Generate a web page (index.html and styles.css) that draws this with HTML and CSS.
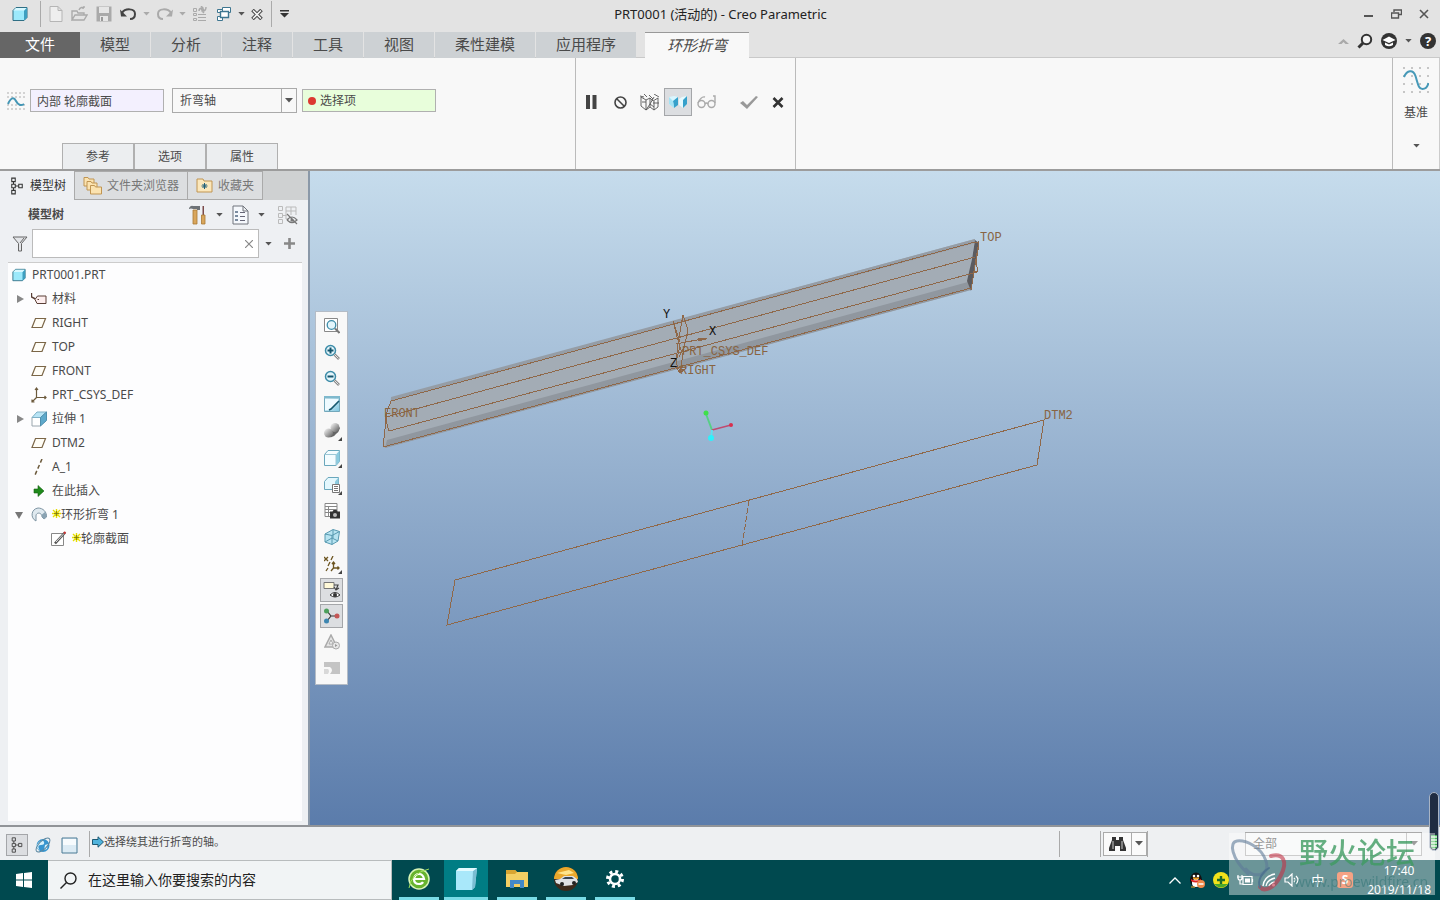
FILE: index.html
```html
<!DOCTYPE html>
<html lang="zh-CN">
<head>
  <meta charset="UTF-8">
  <meta name="viewport" content="width=device-width, initial-scale=1.0">
  <title>PRT0001 (活动的) - Creo Parametric</title>
  <link rel="stylesheet" href="styles.css">
</head>
<body>
  <!-- shared icons -->
  <svg class="defs" width="0" height="0" aria-hidden="true">
    <defs>
      <linearGradient id="gBlue" x1="0" y1="0" x2="1" y2="1"><stop offset="0" stop-color="#fff"/><stop offset="1" stop-color="#7cc6e0"/></linearGradient>
      <linearGradient id="gBody" x1="0" y1="0" x2="1" y2="1"><stop offset="0" stop-color="#fff"/><stop offset="1" stop-color="#555"/></linearGradient>
      <symbol id="caret" viewBox="0 0 8 5"><path d="M0 0h8L4 4.500z" fill="currentColor"/></symbol>
      <symbol id="cube" viewBox="0 0 16 16"><path d="M1 4.500 4 1.500h11v10L12 14.500H1z" fill="#9ce9fb" stroke="#2f6f85"/><path d="M12 4.500 15 1.500v10L12 14.500z" fill="#3e9fc0"/><path d="M1.500 4.500 4 2h10.500L12 4.500z" fill="#d8f8ff"/></symbol>
      <symbol id="plane" viewBox="0 0 16 16"><path d="M4.500 3.500h10L11 12.500H1z" fill="#fffdf6" stroke="#7b6647" stroke-width="1.200"/></symbol>
      <symbol id="nodes" viewBox="0 0 16 20"><g fill="none" stroke="currentColor" stroke-width="1.200"><path d="M2 1h4v4H2zM2 8h4v4H2zM10 8h4v4h-4zM2 15h4v4H2zM4 5v3M4 12v3M6 10h4"/></g></symbol>
      <symbol id="star" viewBox="0 0 9 9"><path d="M4.500 0v9M0 4.500h9M1 1l7 7M8 1 1 8" stroke="#e6de00" stroke-width="1.400"/><path d="M4.500 2v5M2 4.500h5" stroke="#77721a" stroke-width=".8"/></symbol>
      <symbol id="magnifier" viewBox="0 0 16 16"><circle cx="6.500" cy="6.500" r="5" fill="#e3f5fb" stroke="#3d8ca8" stroke-width="1.500"/><path d="m10.500 10.500 4.500 4.500" stroke="#8a8a8a" stroke-width="2.600"/><path d="m10.500 10.500 4 4" stroke="#e5e5e5"/></symbol>
      <symbol id="wave" viewBox="0 0 26 26"><path d="M1 1h.01M9 1h.01M17 1h.01M25 1h.01M1 9h.01M9 9h.01M17 9h.01M25 9h.01M1 17h.01M9 17h.01M17 17h.01M25 17h.01M1 25h.01M9 25h.01M17 25h.01M25 25h.01" stroke="#333" stroke-linecap="square"/><path d="M1 10C4 3 10 2 12.500 9c2.500 8 3 13 7 13 3 0 5-2 6-6" fill="none" stroke="#4699b8" stroke-width="2"/></symbol>
    </defs>
  </svg>

  <div class="app">
    <header class="titlebar">
      <div class="quick">
        <svg class="quick-app" width="16" height="16"><use href="#cube"/></svg>
        <i class="vline"></i>
        <button type="button" aria-label="新建"><svg width="14" height="16" viewBox="0 0 14 16"><path d="M1 .5h8l4 4v11H1zM9 .5v4h4" fill="#eee" stroke="#b5b5b5"/></svg></button>
        <button type="button" aria-label="打开"><svg width="17" height="16" viewBox="0 0 17 16"><path d="M1 14V5h5l1 2h6v2M1 14l3-5h12l-3 5zM8 4c1-3 4-3 5-2m0 0h-2m2 0V0" fill="none" stroke="#aaa" stroke-width="1.400"/></svg></button>
        <button type="button" aria-label="保存"><svg width="16" height="16" viewBox="0 0 16 16"><path d="M.5.500h15v15H.500z" fill="#aaa"/><path d="M3 1h10v6H3zM4 10h8v5H4z" fill="#e6e6e6"/><path d="M5 11h2v4H5z" fill="#999"/></svg></button>
        <button type="button" aria-label="撤消"><svg width="17" height="14" viewBox="0 0 17 14"><path d="M2 6c3-5 13-5 13 1 0 3-2 5-5 5" fill="none" stroke="#444" stroke-width="2"/><path d="M0 2.500 1 9.500h6z" fill="#444"/></svg></button>
        <svg class="caret dim" width="7" height="4"><use href="#caret"/></svg>
        <button type="button" aria-label="重做"><svg width="17" height="14" viewBox="0 0 17 14"><path d="M15 6C12 1 2 1 2 7c0 3 2 5 5 5" fill="none" stroke="#aaa" stroke-width="2"/><path d="m17 2.500-1 7h-6z" fill="#aaa"/></svg></button>
        <svg class="caret dim" width="7" height="4"><use href="#caret"/></svg>
        <button type="button" aria-label="重新生成"><svg width="16" height="16" viewBox="0 0 16 16"><g fill="none" stroke="#aaa"><path d="M1.500 2.500h3v3h-3zM1.500 7.500h3v2h-3zM1.500 12.500h3v2h-3zM6 8.500h8M6 11.500h8M6 14.500h8"/><path d="M7 5c0-2 1-3 3-3M9 0l2 2-2 2M14 1c0 3-1 4-3 4m1-2-2 2 2 2" stroke-width="1.400"/></g></svg></button>
        <button type="button" aria-label="窗口"><svg width="16" height="16" viewBox="0 0 16 16"><g fill="#fff" stroke="#3e7690"><path d="M6.500 1.500h8v5h-8z"/><path d="M1.500 3.500h5v3h-5z"/><path d="M1.500 10.500h5v4h-5z"/><path d="M4.500 5.500h8v6h-8z" stroke-width="1.400"/></g></svg></button>
        <svg class="caret" width="7" height="4"><use href="#caret"/></svg>
        <button type="button" aria-label="关闭窗口"><svg width="12" height="11" viewBox="0 0 12 11"><path d="m1.500 1 9 9m0-9-9 9" stroke="#444" stroke-width="3.600"/><path d="m2 1.500 8 8m0-8-8 8" stroke="#f5f5f5" stroke-width="1.600"/></svg></button>
        <i class="vline"></i>
        <button type="button" aria-label="自定义"><svg width="9" height="8" viewBox="0 0 9 8"><path d="M0 0h9v1.500H0zM0 3h9L4.500 7.500z" fill="#333"/></svg></button>
      </div>
      <h1>PRT0001 (活动的) - Creo Parametric</h1>
      <div class="window-btns">
        <button type="button" aria-label="最小化"><svg width="10" height="10" viewBox="0 0 10 10"><path d="M0 7h9" stroke="#555" stroke-width="2"/></svg></button>
        <button type="button" aria-label="还原"><svg width="11" height="10" viewBox="0 0 11 10"><path d="M3 3V1h7.500v4.500H8M.5 4h7v5h-7z" fill="none" stroke="#555" stroke-width="1.400"/></svg></button>
        <button type="button" aria-label="关闭"><svg width="10" height="10" viewBox="0 0 10 10"><path d="m1 1 8 8m0-8L1 9" stroke="#555" stroke-width="1.600"/></svg></button>
      </div>
    </header>

    <nav class="tabs">
      <button type="button" class="tab file">文件</button>
      <button type="button" class="tab">模型</button>
      <button type="button" class="tab">分析</button>
      <button type="button" class="tab">注释</button>
      <button type="button" class="tab">工具</button>
      <button type="button" class="tab">视图</button>
      <button type="button" class="tab">柔性建模</button>
      <button type="button" class="tab">应用程序</button>
      <button type="button" class="tab active">环形折弯</button>
      <div class="tab-tools">
        <button type="button" aria-label="最小化功能区"><svg width="11" height="6" viewBox="0 0 11 6"><path d="m0 6 5.500-5L11 6H7.500l-2-2-2 2z" fill="#aaa"/></svg></button>
        <button type="button" aria-label="搜索命令"><svg width="16" height="16" viewBox="0 0 16 16"><circle cx="9.500" cy="6.500" r="4.700" fill="#f4f4f4" stroke="#333" stroke-width="2"/><path d="m6 10-4.500 4.500" stroke="#333" stroke-width="3"/></svg></button>
        <button type="button" aria-label="学习"><svg width="16" height="16" viewBox="0 0 16 16"><circle cx="8" cy="8" r="8" fill="#333"/><path d="m1.500 7 6.500-3.500L14.500 7 8 10zM4 9.500v2.500q4 2.500 8 0V9.500l-4 2z" fill="#fff"/></svg></button>
        <svg class="caret" width="7" height="4"><use href="#caret"/></svg>
        <button type="button" class="help" aria-label="帮助">?</button>
      </div>
    </nav>

    <section class="ribbon">
      <div class="dashboard">
        <div class="dash-row">
          <svg width="18" height="18" viewBox="0 0 18 18"><path d="M.5 1h17M.5 17h17M.5 5h17M.5 13h17" stroke="#666" stroke-dasharray="1 3"/><path d="M1 12C4 5 7 5 9 9s5 5 8 3" fill="none" stroke="#4496b5" stroke-width="2"/></svg>
          <input class="field profile" type="text" value="内部 轮廓截面" aria-label="轮廓截面">
          <span class="select-box bend">
            <select aria-label="折弯类型"><option>折弯轴</option><option>折弯半径</option><option>360 度折弯</option></select>
            <svg class="caret" width="8" height="5"><use href="#caret"/></svg>
          </span>
          <label class="field collector"><i class="dot"></i><input type="text" value="选择项" aria-label="折弯轴收集器"></label>
        </div>
        <div class="subtabs">
          <button type="button">参考</button>
          <button type="button">选项</button>
          <button type="button">属性</button>
        </div>
      </div>
      <div class="controls">
        <button type="button" aria-label="暂停"><svg width="12" height="14" viewBox="0 0 12 14"><path d="M1 0h4v14H1zM7.500 0h4v14h-4z" fill="#444"/></svg></button>
        <button type="button" aria-label="无预览"><svg width="13" height="13" viewBox="0 0 13 13"><circle cx="6.500" cy="6.500" r="5.500" fill="none" stroke="#444" stroke-width="1.600"/><path d="m2.500 2.500 8 8" stroke="#444" stroke-width="1.600"/></svg></button>
        <button type="button" aria-label="分离预览"><svg width="19" height="17" viewBox="0 0 19 17"><path d="M1 3l5 3 4-2v9l-4 3-5-4zM6 6v10M10 4l3 3 5-3v9l-4 3-4-3M14 7v9M6 16l4-6 4-7M0 2l4 1M19 3l-5-3M4 0l3 3M2 8h4M13 9h6M10 10l4 3M9 1l4 4" fill="none" stroke="#555" stroke-width=".9"/></svg></button>
        <button type="button" class="pressed" aria-label="连接预览"><svg width="19" height="14" viewBox="0 0 19 14"><path d="M0 2l5-1 4 1-4 11-5-4z" fill="#d9f6ff"/><path d="M9 2v8l-4 3-1-7z" fill="#36a1cb"/><path d="M10 4l3-2 5-1-4 12-4-3z" fill="#e4faff"/><path d="M18 1v8l-4 4V5z" fill="#36a1cb"/><path d="M0 2l4 4 1 7-5-4z" fill="#a5e3f5"/></svg></button>
        <button type="button" aria-label="校验"><svg width="20" height="14" viewBox="0 0 20 14"><g fill="none" stroke="#aaa" stroke-width="1.400"><circle cx="4.500" cy="9" r="3.500"/><circle cx="14.500" cy="9" r="3.500"/><path d="M8 9q1.500-2 3 0M1 8Q4 1 8 2M18 8V1h-2"/></g></svg></button>
        <button type="button" class="ok" aria-label="确定"><svg width="20" height="15" viewBox="0 0 20 15"><path d="m1 8 3-2 4 4L17 1l2 1L8 14z" fill="#999"/></svg></button>
        <button type="button" aria-label="取消"><svg width="12" height="11" viewBox="0 0 12 11"><path d="m1.500 1 9 9m0-9-9 9" stroke="#333" stroke-width="2.600"/></svg></button>
      </div>
      <div class="ribbon-fill"></div>
      <button type="button" class="datum">
        <svg width="26" height="26"><use href="#wave"/></svg>
        <span>基准</span>
        <svg class="caret" width="7" height="4"><use href="#caret"/></svg>
      </button>
    </section>

    <main class="work">
      <aside class="sidebar">
        <div class="side-tabs">
          <button type="button" class="active"><svg width="14" height="20"><use href="#nodes"/></svg>模型树</button>
          <button type="button"><svg width="19" height="19" viewBox="0 0 19 19"><g fill="#fbe3b0" stroke="#c09552"><path d="M1 1.500h4l1 1.500h5v7H1z"/><path d="M4 5.500h4l1 1.500h5v7H4z"/><path d="M7.500 9.500h4l1 1.500h6v7h-11z"/></g></svg>文件夹浏览器</button>
          <button type="button"><svg width="17" height="15" viewBox="0 0 17 15"><path d="M1 1h6l1 2h8v11H1z" fill="#fbe7bb" stroke="#c09552"/><path d="M8.500 5v6M5.500 8h6M6.500 6l4 4m0-4-4 4" stroke="#20607a"/></svg>收藏夹</button>
        </div>
        <div class="side-head">
          <h2>模型树</h2>
          <button type="button" aria-label="设置"><svg width="18" height="20" viewBox="0 0 18 20"><path d="M0 3q2-3 4-2h7v4H8V4H4Q2 3 0 4z" fill="#6d7277"/><path d="M4 5h4v14H4z" fill="#d9a65c" stroke="#a87833" stroke-width=".8"/><path d="M13.500 1h1.500v9h-1.500z" fill="#7a4a4a"/><path d="M12.500 10h3.500v9h-3.500z" fill="#d9a65c" stroke="#a87833" stroke-width=".8"/></svg></button>
          <svg class="caret" width="7" height="4"><use href="#caret"/></svg>
          <button type="button" aria-label="显示"><svg width="17" height="20" viewBox="0 0 17 20"><path d="M1 1h10l5 5v13H1zM11 1v5h5" fill="#f5f8fc" stroke="#70757c"/><path d="M3 6h3v2H3zM3 10h3v2H3zM3 14h3v2H3z" fill="#7b8ca0"/><path d="M8 7.500h5M8 11.500h5M8 15.500h5" stroke="#667"/></svg></button>
          <svg class="caret" width="7" height="4"><use href="#caret"/></svg>
          <button type="button" class="last" aria-label="树列"><svg width="21" height="20" viewBox="0 0 21 20"><g fill="none" stroke="#bbb"><path d="M1.500 1.500h4v4h-4zM1.500 8.500h4v4h-4zM1.500 14.500h4v4h-4zM5.500 10.500h4M9 2h10v8M9 6h10M14 2v8M9 2v12h3"/></g><path d="M10 15q5-6 10 0-5 5-10 0M10 9l10 10" fill="none" stroke="#777" stroke-width="1.200"/><circle cx="15" cy="15" r="1.600" fill="#777"/></svg></button>
        </div>
        <div class="side-search">
          <svg width="16" height="16" viewBox="0 0 16 16"><path d="M1 1h14L9.500 7.500V15h-3V7.500z" fill="#e3e5e8" stroke="#666"/><path d="m12 2-4 5" stroke="#666"/></svg>
          <div class="search-box">
            <input type="text" aria-label="过滤模型树">
            <button type="button" aria-label="清除"><svg width="8" height="8" viewBox="0 0 8 8"><path d="m0 0 8 8m0-8L0 8" stroke="#888" stroke-width="1.200"/></svg></button>
          </div>
          <svg class="caret" width="7" height="4"><use href="#caret"/></svg>
          <button type="button" aria-label="添加"><svg width="11" height="11" viewBox="0 0 11 11"><path d="M5.500 0v11M0 5.500h11" stroke="#888" stroke-width="2.600"/></svg></button>
        </div>
        <ul class="tree">
          <li class="root"><svg width="14" height="14"><use href="#cube"/></svg>PRT0001.PRT</li>
          <li><i class="exp closed"></i><svg width="16" height="16" viewBox="0 0 16 16"><path d="M.5 2v4l4 2" fill="none" stroke="#5a3f36" stroke-width="1.400"/><path d="M4 8.500 6.500 5H15v7.500H6z" fill="#fdeeee" stroke="#5a3f36"/><path d="M6.500 8.500h1.500" stroke="#5a3f36"/></svg>材料</li>
          <li><i class="exp"></i><svg width="16" height="16"><use href="#plane"/></svg>RIGHT</li>
          <li><i class="exp"></i><svg width="16" height="16"><use href="#plane"/></svg>TOP</li>
          <li><i class="exp"></i><svg width="16" height="16"><use href="#plane"/></svg>FRONT</li>
          <li><i class="exp"></i><svg width="16" height="16" viewBox="0 0 16 16"><path d="M5.500 1v9.500H15M5.500 10.500 1 15M4 3l1.500-2L7 3M13.500 9l1.500 1.500-1.500 1.500M1 12.500V15h2.500" fill="none" stroke="#6c5a3c" stroke-width="1.200"/></svg>PRT_CSYS_DEF</li>
          <li><i class="exp closed"></i><svg width="16" height="16" viewBox="0 0 16 16"><path d="M1 6.500h8.500V15H1z" fill="#fff" stroke="#9aa6ae"/><path d="M1 6.500 6 1h9.500l-6 5.500z" fill="#b8e4f5" stroke="#7fb0c6"/><path d="m9.500 6.500 6-5.500v8.500l-6 5.500z" fill="#5ea9cb" stroke="#4f8fae"/></svg>拉伸 1</li>
          <li><i class="exp"></i><svg width="16" height="16"><use href="#plane"/></svg>DTM2</li>
          <li><i class="exp"></i><svg width="16" height="16" viewBox="0 0 16 16"><path d="M11 0 4 16" stroke="#6c5a3c" stroke-width="1.500" stroke-dasharray="4 2.500"/></svg>A_1</li>
          <li><i class="exp"></i><svg width="16" height="16" viewBox="0 0 16 16"><path d="M3 6h4V2.500L13 8l-6 5.500V10H3z" fill="#1f8a1b" stroke="#145f12" stroke-width=".6"/></svg>在此插入</li>
          <li><i class="exp open"></i><svg width="16" height="16" viewBox="0 0 16 16"><path d="M5 14C-1 11 0 2 7 1c5 0 9 4 8.500 9l-2.500 2-2-2C11 5 5 5 5 9z" fill="#dfe9ef" stroke="#7f95a3"/><path d="m11 10 2 2 2.500-2q0-3-1.500-5l-3 2.500z" fill="#8aa3b3"/></svg><svg class="star" width="9" height="9"><use href="#star"/></svg>环形折弯 1</li>
          <li class="child"><svg width="16" height="16" viewBox="0 0 16 16"><path d="M.5 2.500h12v12H.500z" fill="#fff" stroke="#888"/><path d="M4 12.500 14 1.500" stroke="#555" stroke-width="2.600"/><path d="M5 11 13 2.500" stroke="#ddd"/><path d="m13 2.500 1.500-1.500" stroke="#c33" stroke-width="2"/></svg><svg class="star" width="9" height="9"><use href="#star"/></svg>轮廓截面</li>
        </ul>
      </aside>

      <div class="viewport">
        <svg class="scene" width="100%" height="100%">
          <g transform="translate(-310 -171)">
            <!-- extruded strip -->
            <path d="M391 398 975 239l-8 52-582 157-2-1z" fill="#a3acb5"/>
            <path d="M391 397 975 239v4L391 401z" fill="#959da6"/>
            <path d="m387 440 581-158 3 8-586 158z" fill="#90979f"/>
            <path d="m975 240 4 3-8 48-4-10 5-22z" fill="#5b5b5f"/>
            <g class="datum-lines">
              <path d="M391 401 975 242M386 417 975 257M389 431l588-159M383 447l588-159M391 401l-6 16 4 14M387 412l-4 35"/>
              <path d="m975 242 4 1-3 20 2 8-5 1M979 241l-8 49"/>
              <path d="M683 315l5 15-4 18-4 25M683 315l-5 28-2 20 5 10M673 321l7 21M673 321l3 12M676 344l31-6M698 338l8 1-8 2zM676 333l4 14 3 9M680 346l-3 12M684 347l-5 10M676 367l10 1-6 5z"/>
              <path d="m455 580 589-160-7 45-590 160z"/>
              <path d="m749 500-7 47" stroke-dasharray="6 2"/>
            </g>
            <g class="datum-tags">
              <text x="980" y="241">TOP</text>
              <text x="384" y="417">FRONT</text>
              <text x="682" y="355">PRT_CSYS_DEF</text>
              <text x="680" y="374">RIGHT</text>
              <text x="1044" y="419">DTM2</text>
            </g>
            <g class="axis-tags">
              <text x="663" y="318">Y</text>
              <text x="709" y="335">X</text>
              <text x="670" y="367">Z</text>
            </g>
            <!-- spin center -->
            <path d="M712 430 706 414" stroke="#56cf86" stroke-width="2"/>
            <path d="m712 430 19-5" stroke="#c04a70" stroke-width="1.500"/>
            <path d="m712 430-1 8" stroke="#5fe0f0" stroke-width="2"/>
            <circle cx="706" cy="413" r="2.500" fill="#3fe04a"/>
            <circle cx="731" cy="425" r="2" fill="#d92f4d"/>
            <circle cx="711" cy="438" r="3" fill="#2ff0fb"/>
          </g>
        </svg>

        <div class="view-tools">
          <button type="button" aria-label="重新调整"><svg width="16" height="16" viewBox="0 0 16 16"><path d="M.5.500h13v13H.500z" fill="#fff" stroke="#888"/><circle cx="7.500" cy="7" r="4.300" fill="#e3f5fb" stroke="#3d8ca8" stroke-width="1.300"/><path d="m11 10.500 4.500 4.500" stroke="#777" stroke-width="2"/></svg></button>
          <button type="button" aria-label="放大"><svg width="16" height="16" viewBox="0 0 16 16"><use href="#magnifier"/><path d="M6.500 3.500v6M3.500 6.500h6" stroke="#14546c" stroke-width="2"/></svg></button>
          <button type="button" aria-label="缩小"><svg width="16" height="16" viewBox="0 0 16 16"><use href="#magnifier"/><path d="M3.500 6.500h6" stroke="#14546c" stroke-width="2"/></svg></button>
          <button type="button" aria-label="重画"><svg width="16" height="16" viewBox="0 0 16 16"><path d="M.5.500h15v15H.500z" fill="url(#gBlue)" stroke="#73a8bb"/><path d="M1 3h13v2L6 14H1z" fill="#eefaff"/><path d="M15 5 7 13l-2 1" stroke="#17596f" stroke-width="1.600" fill="none"/><path d="M0 0h16v2.500H0z" fill="#7fb9cd"/></svg></button>
          <button type="button" class="fly" aria-label="渲染选项"><svg width="16" height="16" viewBox="0 0 16 16"><path d="M2 12q6 5 10-1 3-2 4-6L14 3 5 8z" fill="#666"/><circle cx="11" cy="4.500" r="4.500" fill="url(#gBody)"/><circle cx="4.500" cy="10" r="4.500" fill="url(#gBody)"/></svg></button>
          <button type="button" class="fly" aria-label="显示样式"><svg width="16" height="16" viewBox="0 0 16 16"><path d="M.5 4.500 4 .5h11.500v11L12 15.500H.500z" fill="#f3fcff" stroke="#6aa7bc"/><path d="m12 4.500 3.500-4v11l-3.500 4z" fill="#8bcbe0"/><path d="M.5 4.500H12v11" fill="none" stroke="#9cc7d6"/></svg></button>
          <button type="button" class="fly" aria-label="已保存方向"><svg width="16" height="16" viewBox="0 0 16 16"><path d="M.5 4.500 4 .5h10.500v8L11 12.500H.500z" fill="#e3f7fd" stroke="#6aa7bc"/><path d="m11 4.500 3.500-4v8l-3.500 4z" fill="#8bcbe0"/><path d="M8.500 7.500h7v8h-7z" fill="#fff" stroke="#777"/><path d="M10 9.500h4M10 11.500h4M10 13.500h4" stroke="#777"/></svg></button>
          <button type="button" aria-label="视图管理器"><svg width="16" height="16" viewBox="0 0 16 16"><path d="M1 .5h12v13H1zM1 3.500h12M1 6.500h12M1 9.500h6M4.500 3v10" fill="#fff" stroke="#888"/><path d="M6 8.500h2.500l1-1.500h3l1 1.500H16v7H6z" fill="#333"/><circle cx="11" cy="12" r="2" fill="#bbb"/></svg></button>
          <button type="button" aria-label="透视图"><svg width="16" height="16" viewBox="0 0 16 16"><path d="m1 5 8-4.500 6.500 2L14 12l-6 3.500L1 13z" fill="#b8e4f1" stroke="#5799b0"/><path d="m1 5 7 1.500V15.500M8 6.500l7.500-4M1 13l7-4 6 3M9 1v8" fill="none" stroke="#5799b0"/></svg></button>
          <button type="button" class="fly" aria-label="基准显示"><svg width="16" height="16" viewBox="0 0 16 16"><path d="m0 1 4 4m0-4L0 5M9 0 7 4M6 6l-2 4M4 12l-2 3M9.500 6v6H15M9.500 12 7 15M8 8l1.500-2L11 8M13.500 10.500 15 12l-1.500 1.500" fill="none" stroke="#6c5520" stroke-width="1.300"/></svg></button>
          <button type="button" class="pressed" aria-label="注释显示"><svg width="18" height="18" viewBox="0 0 18 18"><path d="M1 1.500h10v6H1z" fill="#fff9d8" stroke="#777"/><path d="M11 4h4l-2 5M11 6l2 3 3-2" fill="none" stroke="#444" stroke-width="1.200"/><path d="M7 14q5-5 10 0-5 4-10 0" fill="#fff" stroke="#333"/><circle cx="12" cy="14" r="2" fill="#333"/></svg></button>
          <button type="button" class="pressed" aria-label="旋转中心"><svg width="18" height="16" viewBox="0 0 18 16"><path d="m4 3 4 5h6M8 8l-4 5" fill="none" stroke="#333" stroke-width="1.200"/><circle cx="3.500" cy="3" r="2.500" fill="#4c9f5c"/><circle cx="14" cy="8" r="2.500" fill="#c45656"/><circle cx="3.500" cy="13" r="2.500" fill="#3d86b0"/></svg></button>
          <button type="button" aria-label="模拟"><svg width="16" height="16" viewBox="0 0 16 16"><path d="m7 1 6 12H1z" fill="#e3e3e3" stroke="#aaa" stroke-width="1.500"/><path d="m7 6 2 4H5z" fill="#fff" stroke="#aaa"/><circle cx="12" cy="11.500" r="3.500" fill="#e8e8e8" stroke="#aaa"/><path d="m11 10 2.500 1.500L11 13z" fill="#999"/></svg></button>
          <button type="button" aria-label="截面"><svg width="16" height="12" viewBox="0 0 16 12"><path d="M0 0h16v12H6q4-4 0-7H0z" fill="#c4c4c4"/><path d="M0 7h4q2 2 0 5H0z" fill="#d8d8d8"/></svg></button>
        </div>
      </div>
    </main>

    <footer class="status">
      <button type="button" class="pressed" aria-label="模型树显示"><svg width="14" height="16"><use href="#nodes"/></svg></button>
      <button type="button" aria-label="浏览器"><svg width="18" height="18" viewBox="0 0 18 18"><circle cx="9" cy="9.500" r="6.500" fill="#3795cf"/><path d="M5 6q4-3 5 0t-3 3-2 4-3-3zM11 9l3-1-1 5-3 1z" fill="#d5f1fc"/><ellipse cx="9" cy="9" rx="9" ry="4" fill="none" stroke="#5b87a0" transform="rotate(-45 9 9)"/></svg></button>
      <button type="button" aria-label="全屏"><svg width="17" height="17" viewBox="0 0 17 17"><path d="M1 1h15v15H1z" fill="#dcebf4" stroke="#4b7b95"/><path d="M2 2h13v6H2z" fill="#f7fbfd"/></svg></button>
      <i class="vline"></i>
      <p><svg width="12" height="12" viewBox="0 0 12 12"><path d="M.5 3.500H6V.800L11.500 6 6 11.200V8.500H.500z" fill="#4fb3dc" stroke="#1c5872"/></svg>选择绕其进行折弯的轴。</p>
      <div class="status-right">
        <i class="vline"></i>
        <i class="vline find-line"></i>
        <div class="find">
          <button type="button" aria-label="查找"><svg width="17" height="16" viewBox="0 0 17 16"><path d="M3 1h4v3h3V1h4v3l3 8v3h-6v-5H6v5H0v-3l3-8z" fill="#333"/><path d="M4 5v8M13 5v8" stroke="#999" stroke-width="1.500"/></svg></button>
          <button type="button" aria-label="查找选项"><svg class="caret" width="8" height="5"><use href="#caret"/></svg></button>
        </div>
        <i class="vline"></i>
        <span class="select-box filter">
          <select aria-label="选择过滤器"><option>全部</option><option>几何</option><option>基准</option></select>
          <svg class="caret" width="8" height="5"><use href="#caret"/></svg>
        </span>
      </div>
    </footer>

    <div class="taskbar">
      <button type="button" class="start" aria-label="开始"><svg width="16" height="16" viewBox="0 0 16 16"><path d="m0 2 7-1v6.500H0zM8 1l8-1v7.500H8zM0 8.500h7V15l-7-1zM8 8.500h8V16l-8-1z" fill="#fff"/></svg></button>
      <label class="task-search">
        <svg width="17" height="17" viewBox="0 0 17 17"><circle cx="10.500" cy="6.500" r="5.500" fill="none" stroke="#222" stroke-width="1.400"/><path d="M6.500 10.500.500 16.500" stroke="#222" stroke-width="1.400"/></svg>
        <input type="text" placeholder="在这里输入你要搜索的内容" aria-label="搜索">
      </label>
      <div class="task-apps">
        <button type="button" aria-label="浏览器"><svg width="24" height="24" viewBox="0 0 24 24"><circle cx="12" cy="12" r="10" fill="#67b32e" stroke="#d8f5b8" stroke-width="1.500"/><path d="M7 12h10q-1-5-5-5t-5 5q0 5 5 5 3 0 4-2" fill="none" stroke="#fff" stroke-width="2.200"/><path d="M2 21Q4 6 22 2" fill="none" stroke="#9fe05a"/></svg></button>
        <button type="button" class="active" aria-label="Creo"><svg width="22" height="24" viewBox="0 0 22 24"><path d="m1 4 3-3h18l-2 19-3 3H1z" fill="#a9e8fa"/><path d="M18 4 22 1l-2 19-3 3z" fill="#79bdd2"/><path d="m1 4 3-3h18l-4 3z" fill="#e2fbff"/></svg></button>
        <button type="button" aria-label="文件资源管理器"><svg width="22" height="20" viewBox="0 0 22 20"><path d="M0 1h9l2 2h11v15H0z" fill="#f4cf63"/><path d="M0 1h9l2 2-2 2H0z" fill="#d9a531"/><path d="M4 11h14v8h-4v-4H8v4H4z" fill="#4389c8"/></svg></button>
        <button type="button" aria-label="游戏"><svg width="24" height="24" viewBox="0 0 24 24"><circle cx="12" cy="12" r="12" fill="#3d2a1c"/><path d="M0 12a12 12 0 0 1 24 0z" fill="#e9a82c"/><path d="m3 6 12-3 5 3-8 2z" fill="#ffe48b"/><path d="m1 13 5-1 4-3h9l4 3 1 3-5 3-9 1-8-3z" fill="#dfe1e4"/><path d="m8 12 3-2h7l2 2z" fill="#394552"/><circle cx="8" cy="17" r="2" fill="#222"/><circle cx="20" cy="16" r="2" fill="#222"/></svg></button>
        <button type="button" aria-label="设置"><svg width="18" height="18" viewBox="0 0 18 18"><circle cx="9" cy="9" r="7.500" fill="none" stroke="#fff" stroke-width="3" stroke-dasharray="3 2.890"/><circle cx="9" cy="9" r="5" fill="none" stroke="#fff" stroke-width="2.500"/></svg></button>
      </div>
      <div class="tray">
        <svg width="12" height="7" viewBox="0 0 12 7"><path d="m.5 6.500 5.500-5.500 5.500 5.500" fill="none" stroke="#fff" stroke-width="1.300"/></svg>
        <svg width="16" height="16" viewBox="0 0 16 16"><ellipse cx="7" cy="8" rx="6" ry="7.500" fill="#111"/><ellipse cx="7" cy="11" rx="4" ry="4" fill="#fff"/><path d="M2 7q5 3 10 0v2q-5 3-10 0z" fill="#d22"/><circle cx="5" cy="4" r="1.300" fill="#fff"/><circle cx="9" cy="4" r="1.300" fill="#fff"/><path d="M4 6h6L7 7.500zM2 15h4" stroke="#f5a020" fill="#f5a020"/><circle cx="12" cy="12" r="4" fill="#f08a4a"/><path d="M9.500 12h5" stroke="#fff" stroke-width="1.500"/></svg>
        <svg width="16" height="16" viewBox="0 0 16 16"><circle cx="8" cy="8" r="8" fill="#f2e21c"/><path d="M1 12q7 7 14 0" fill="#4aa92c"/><path d="M8 4v8M4 8h8" stroke="#1e6b2a" stroke-width="2.400"/></svg>
        <svg width="17" height="14" viewBox="0 0 17 14"><path d="M6 3.500h9v8H6zM15.500 6v3M1 2v3q0 2 2 2t2-2V2M0 4h6M3 7v4h3" fill="none" stroke="#fff" stroke-width="1.200"/><path d="M8 5.500h5v4H8z" fill="#fff"/></svg>
        <svg width="14" height="14" viewBox="0 0 14 14"><path d="M1 13Q2 3 13 1M4 13q1-6 9-8M7 13q1-3 6-4" fill="none" stroke="#fff" stroke-width="1.400"/><circle cx="11.500" cy="12" r="1.500" fill="#fff"/></svg>
        <svg width="16" height="14" viewBox="0 0 16 14"><path d="M1 5h3l4-4v12L4 9H1zM10 5q2 2 0 4M12 3q4 4 0 8" fill="none" stroke="#fff" stroke-width="1.200"/></svg>
        <span class="ime">中</span>
        <span class="sogou">S</span>
        <time>17:40<br>2019/11/18</time>
      </div>
    </div>
  </div>

  <div class="meter"><i></i></div>

  <div class="watermark">
    <svg width="62" height="58" viewBox="0 0 62 58"><g fill="none" stroke-linecap="round"><path d="M19 38C2 22 0 6 8 5s24 5 29 20-13 18-20 8" stroke="#5f7a99" stroke-width="3"/><path d="M42 20c12-3 17 5 10 19S35 56 31 51" stroke="#c23447" stroke-width="4"/><path d="M31 51c-3-6 2-15 9-19" stroke="#3d5f8a" stroke-width="2"/></g></svg>
    <div>
      <strong>野火论坛</strong>
      <span>www.proewildfire.cn</span>
    </div>
  </div>
</body>
</html>
```
FILE: styles.css
```css
* {
  box-sizing: border-box;
}
body {
  margin: 0;
  font-family: "Noto Sans", "Noto Sans CJK SC", sans-serif;
  font-size: 12px;
  line-height: 18px;
  color: #4a4a4a;
  overflow: hidden;
}
button,
input,
select {
  font: inherit;
  color: inherit;
  margin: 0;
  padding: 0;
  border: none;
  background: none;
  border-radius: 0;
  outline: none;
}
button {
  display: flex;
  align-items: center;
  justify-content: center;
}
svg {
  flex: none;
  display: block;
}
h1, h2, p, ul {
  margin: 0;
  padding: 0;
}
.defs {
  position: absolute;
}
.app {
  height: 100vh;
  display: flex;
  flex-direction: column;
}
.caret {
  color: #555;
}
.caret.dim {
  color: #aaa;
}
.vline {
  flex: none;
  width: 1px;
  height: 26px;
  background: #aaa;
}
.pressed {
  background: #dcdee1;
  border: 1px solid #a4a6a9;
}

/* title bar */
.titlebar {
  flex: none;
  height: 31px;
  background: #e3e3e3;
  display: grid;
  grid-template-columns: 1fr auto 1fr;
  align-items: center;
  padding: 0 11px 3px 12px;
}
.quick {
  display: flex;
  align-items: center;
  gap: 8px;
}
.quick .caret {
  margin: 0 -2px;
}
.quick-app {
  margin-right: 4px;
}
.titlebar h1 {
  font-size: 13px;
  font-weight: normal;
  color: #222;
}
.window-btns {
  display: flex;
  justify-content: flex-end;
  gap: 17px;
}

/* ribbon tabs */
.tabs {
  flex: none;
  display: flex;
  gap: 1px;
  height: 27px;
  padding-top: 1px;
  background: #e3e3e3;
  border-bottom: 1px solid #c9c9c9;
}
.tab {
  height: 26px;
  padding: 0 20px 2px;
  font-size: 15px;
  background: #cdd1d4;
}
.tab.file {
  padding: 0 25px 2px;
  margin-right: -1px;
  background: #666;
  color: #fff;
}
.tab.active {
  margin-left: 8px;
  padding: 0 22px 2px;
  font-style: italic;
  background: #f8f8f8;
  border-top: 1px solid #999;
}
.tab-tools {
  margin-left: auto;
  padding: 0 4px 8px 0;
  display: flex;
  align-items: center;
  gap: 8px;
}
.help {
  width: 16px;
  height: 16px;
  border-radius: 50%;
  background: #333;
  color: #fff;
  font-size: 13px;
  font-weight: bold;
}

/* ribbon */
.ribbon {
  flex: none;
  display: flex;
  background: #f8f8f8;
  border-bottom: 2px solid #9c9c9c;
  height: 113px;
}
.dashboard {
  width: 576px;
  padding: 30px 0 0 7px;
  border-right: 1px solid #bbb;
  display: flex;
  flex-direction: column;
  justify-content: space-between;
}
.dash-row {
  display: flex;
  align-items: center;
  gap: 5px;
}
.field {
  width: 134px;
  height: 23px;
  border: 1px solid #b0b0b0;
}
.profile {
  padding: 0 6px;
  background: #f3f0fe;
}
.select-box {
  display: grid;
  grid-template-columns: 1fr 15px;
  align-items: center;
  border: 1px solid #aaa;
}
.select-box select {
  grid-area: 1 / 1 / 2 / 3;
  appearance: none;
  height: 100%;
  padding: 0 7px;
}
.select-box .caret {
  grid-area: 1 / 2;
  justify-self: center;
  pointer-events: none;
}
.select-box::before {
  content: "";
  grid-area: 1 / 2;
  align-self: stretch;
  border-left: 1px solid #aaa;
}
.bend {
  width: 125px;
  height: 25px;
  margin-left: 3px;
}
.collector {
  display: flex;
  align-items: center;
  gap: 4px;
  padding: 0 5px;
  background: #e8fedb;
}
.collector input {
  width: 100px;
}
.dot {
  flex: none;
  width: 8px;
  height: 8px;
  border-radius: 50%;
  background: #dc3a30;
}
.subtabs {
  display: flex;
  margin-left: 55px;
}
.subtabs button {
  width: 72px;
  height: 26px;
  background: #eceef0;
  border: 1px solid #b0b0b0;
  border-bottom: none;
}
.controls {
  width: 220px;
  padding: 30px 0 0 1px;
  border-right: 1px solid #bbb;
  display: flex;
  gap: 1px;
}
.controls button {
  width: 28px;
  height: 28px;
}
.controls .ok {
  margin-left: 13px;
}
.ribbon-fill {
  flex: 1;
}
.datum {
  width: 48px;
  border-left: 1px solid #bbb;
  border-right: 1px solid #ccc;
  flex-direction: column;
  justify-content: flex-start;
  padding-top: 9px;
}
.datum span {
  margin: 11px 0 22px;
}

/* model tree */
.work {
  flex: 1;
  min-height: 0;
  display: flex;
}
.sidebar {
  flex: none;
  width: 310px;
  background: #eef0f3;
  border-right: 2px solid #8a98a8;
  display: flex;
  flex-direction: column;
}
.side-tabs {
  display: flex;
  height: 29px;
  background: #cfd1d2;
}
.side-tabs button {
  gap: 5px;
  padding: 0 8px;
  color: #777;
  background: #dcdee0;
  border: 1px solid #aaa;
  border-left: none;
}
.side-tabs .active {
  gap: 6px;
  padding: 0 8px 0 10px;
  color: #333;
  background: #eef0f3;
  border-top: none;
  border-bottom: none;
}
.side-head {
  display: flex;
  align-items: center;
  gap: 9px;
  height: 29px;
  padding: 0 10px 0 28px;
}
.side-head h2 {
  margin-right: auto;
  font-size: 12px;
  font-weight: bold;
}
.side-head .last {
  margin-left: 3px;
}
.side-search {
  display: flex;
  align-items: center;
  padding: 0 13px 0 12px;
  gap: 6px;
}
.side-search > svg:first-child {
  margin-right: -2px;
}
.side-search > button {
  margin-left: 6px;
}
.search-box {
  flex: 1;
  display: flex;
  height: 29px;
  padding-right: 5px;
  background: #fff;
  border: 1px solid #bbb;
}
.search-box input {
  flex: 1;
  min-width: 0;
  padding-left: 6px;
}
.tree {
  flex: 1;
  margin: 4px 6px 4px 8px;
  background: #fdfdfe;
  border-top: 1px solid #ccc;
  list-style: none;
}
.tree li {
  display: flex;
  align-items: center;
  gap: 5px;
  height: 24px;
  padding-left: 7px;
}
.tree .root {
  gap: 6px;
  padding-left: 4px;
}
.tree .child {
  padding-left: 43px;
}
.tree .star {
  margin: 0 -5px 4px 0;
}
.exp {
  width: 11px;
  display: flex;
}
.exp.closed::before {
  content: "";
  margin-left: 2px;
  border: 4px solid transparent;
  border-left: 7px solid #888;
  border-right: none;
}
.exp.open::before {
  content: "";
  border: 4px solid transparent;
  border-top: 7px solid #777;
  border-bottom: none;
}

/* graphics area */
.viewport {
  flex: 1;
  min-width: 0;
  position: relative;
  overflow: hidden;
  background: linear-gradient(#c6dcec, #5b7cab);
}
.scene {
  position: absolute;
  left: 0;
  top: 0;
}
.datum-lines {
  fill: none;
  stroke: #8f6849;
  stroke-width: 1;
  shape-rendering: crispEdges;
}
.datum-tags,
.axis-tags {
  font-family: "Liberation Mono", monospace;
  font-size: 12px;
  fill: #886442;
}
.axis-tags {
  fill: #111;
}
.view-tools {
  position: absolute;
  left: 5px;
  top: 140px;
  display: flex;
  flex-direction: column;
  align-items: center;
  gap: 2px;
  width: 33px;
  padding: 2px 0 4px;
  background: #f8f8f8;
  border: 1px solid #b4bcc6;
}
.view-tools button {
  position: relative;
  width: 23px;
  height: 24px;
}
.view-tools .fly {
  height: 25px;
}
.view-tools .fly::after {
  content: "";
  position: absolute;
  right: 1px;
  bottom: 2px;
  border-left: 4px solid transparent;
  border-bottom: 4px solid #444;
}

/* status bar */
.status {
  flex: none;
  display: flex;
  align-items: center;
  gap: 4px;
  height: 35px;
  padding-left: 6px;
  background: #eef0f2;
  border-top: 2px solid #919498;
}
.status > button {
  width: 22px;
  height: 22px;
  margin-top: 3px;
}
.status > .vline {
  margin-left: 5px;
}
.status p {
  display: flex;
  align-items: center;
  margin: 0 0 3px -2px;
  font-size: 11px;
}
.status-right {
  margin-left: auto;
  display: flex;
  align-items: center;
}
.find-line {
  margin: 0 2px 0 40px;
}
.find {
  display: flex;
  height: 24px;
  background: #fafafa;
  border: 1px solid #aaa;
}
.find button {
  width: 27px;
}
.find button + button {
  width: 15px;
  border-left: 1px solid #aaa;
}
.filter {
  width: 177px;
  height: 24px;
  margin: 0 18px 0 97px;
  background: #f5f6f7;
}

/* windows taskbar */
.taskbar {
  flex: none;
  display: flex;
  height: 40px;
  background: #00494f;
  color: #fff;
}
.start {
  width: 48px;
}
.task-search {
  width: 344px;
  display: flex;
  align-items: center;
  gap: 11px;
  padding-left: 12px;
  background: #f1f4f5;
  border: 1px solid #b8bcbd;
  border-left: none;
  color: #222;
}
.task-search input {
  flex: 1;
  font-size: 14px;
}
.task-search input::placeholder {
  color: #222;
  opacity: 1;
}
.task-apps {
  display: flex;
  gap: 9px;
  margin-left: 7px;
}
.task-apps button {
  width: 40px;
  border-bottom: 3px solid #79dce6;
}
.task-apps .active {
  width: 44px;
  margin-left: -4px;
  background: #007d84;
}
.tray {
  margin-left: auto;
  padding-right: 9px;
  display: flex;
  align-items: center;
  gap: 8px;
}
.ime {
  font-size: 13px;
  margin: 0 5px 0 3px;
}
.sogou {
  width: 16px;
  height: 16px;
  margin-right: 6px;
  border-radius: 3px;
  background: #f0602c;
  font-weight: bold;
  line-height: 16px;
  text-align: center;
}
.tray time {
  text-align: center;
  line-height: 19px;
}

/* overlays */
.meter {
  position: fixed;
  right: 1px;
  bottom: 49px;
  width: 10px;
  height: 59px;
  padding: 1px;
  display: flex;
  align-items: flex-end;
  background: #1f2c42;
  border: 1px solid #a9b4c4;
  border-radius: 5px;
}
.meter i {
  flex: 1;
  height: 14px;
  border-radius: 0 0 4px 4px;
  background: repeating-linear-gradient(#48b85a 0 1px, #b8e5bd 1px 3px);
}
.watermark {
  position: fixed;
  right: 5px;
  bottom: 5px;
  display: flex;
  width: 206px;
  height: 62px;
  padding-top: 3px;
  background: rgba(255, 255, 255, 0.42);
  pointer-events: none;
}
.watermark svg {
  opacity: 0.6;
}
.watermark div {
  display: flex;
  flex-direction: column;
  margin-left: 3px;
}
.watermark strong {
  margin-left: 5px;
  font-size: 29px;
  font-weight: 500;
  line-height: 34px;
  color: rgba(62, 155, 98, 0.8);
}
.watermark span {
  font-size: 14px;
  line-height: 24px;
  color: rgba(38, 110, 110, 0.45);
}
```
